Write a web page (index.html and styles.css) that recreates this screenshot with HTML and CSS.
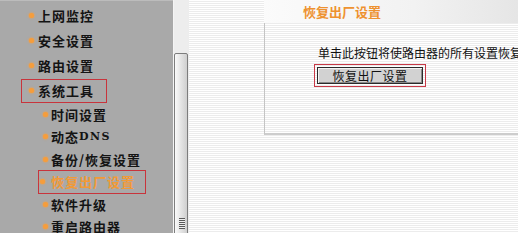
FILE: index.html
```html
<!DOCTYPE html>
<html lang="zh-CN">
<head>
<meta charset="utf-8">
<title>恢复出厂设置</title>
<link rel="stylesheet" href="styles.css">
</head>
<body>
<div class="page">
  <nav class="sidebar">
    <ul class="menu">
      <li class="top"><span class="item"><i class="dot"></i>上网监控</span></li>
      <li class="top"><span class="item"><i class="dot"></i>安全设置</span></li>
      <li class="top"><span class="item"><i class="dot"></i>路由设置</span></li>
      <li class="top"><span class="item mark"><i class="dot"></i>系统工具</span></li>
      <li class="sub"><span class="item"><i class="dot"></i>时间设置</span></li>
      <li class="sub"><span class="item"><i class="dot"></i>动态<b class="latin">DNS</b></span></li>
      <li class="sub"><span class="item"><i class="dot"></i>备份/恢复设置</span></li>
      <li class="sub cur"><span class="item mark"><i class="dot"></i>恢复出厂设置</span></li>
      <li class="sub"><span class="item"><i class="dot"></i>软件升级</span></li>
      <li class="sub"><span class="item"><i class="dot"></i>重启路由器</span></li>
    </ul>
  </nav>
  <div class="scrollbar">
    <div class="thumb"><span class="grip"></span></div>
  </div>
  <main class="main">
    <section class="panel">
      <h1 class="panel-title">恢复出厂设置</h1>
      <div class="panel-body">
        <p class="desc">单击此按钮将使路由器的所有设置恢复到出厂时的默认状态。</p>
        <span class="btn-mark"><button class="btn" type="button">恢复出厂设置</button></span>
      </div>
    </section>
  </main>
</div>
</body>
</html>
```

FILE: styles.css
```css
html, body {
  margin: 0;
  padding: 0;
  height: 100%;
  overflow: hidden;
}
body {
  font-family: "Noto Sans CJK SC", "Liberation Sans", sans-serif;
  background: #fff;
}
.page {
  display: flex;
  height: 233px;
  width: 518px;
  overflow: hidden;
}
.sidebar {
  width: 173px;
  flex: none;
  background: #a9a9a9;
  border-top: 1px solid #bcbcbc;
  box-sizing: border-box;
}
.menu {
  list-style: none;
  margin: 0;
  padding: 2px 0 0 0;
}
.menu li {
  display: flex;
  align-items: center;
}
.menu .top { height: 25px; }
.menu .sub { height: 22.5px; }
.item {
  display: flex;
  align-items: center;
  box-sizing: border-box;
  border: 1px solid transparent;
  font-weight: bold;
  font-size: 13px;
  letter-spacing: 1px;
  color: #141414;
  white-space: nowrap;
}
.top .item {
  margin-left: 21px;
  height: 24px;
  padding: 0 12px 0 7px;
}
.sub .item {
  margin-left: 42px;
  height: 24px;
  padding: 0 10px 0 0;
}
.sub.cur .item {
  margin-left: 38px;
  padding-left: 1px;
  color: #f29a36;
}
.item.mark {
  border-color: #c8343c;
}
.dot {
  width: 5px;
  height: 5px;
  border-radius: 50%;
  background: #f59d3c;
  box-shadow: 0 0 1.5px 0.5px rgba(245, 160, 70, 0.75);
  margin-right: 4px;
  flex: none;
}
.sub .dot { margin-right: 3px; }
.sub.cur .dot { margin-right: 6px; }
.latin {
  font-family: "DejaVu Serif", "Liberation Serif", serif;
  font-size: 11px;
  letter-spacing: 1.5px;
}
.scrollbar {
  width: 16px;
  flex: none;
  box-sizing: border-box;
  border-left: 1px solid #f4f4f4;
  background: #ededed;
  padding-top: 53px;
  position: relative;
}
.thumb {
  height: 190px;
  margin: 0 1px 0 0;
  box-sizing: border-box;
  border: 1px solid #7d7d7d;
  border-radius: 2px;
  background: linear-gradient(to right, #fafafa 0%, #e6e6e6 45%, #cfcfcf 100%);
  position: relative;
}
.grip {
  position: absolute;
  left: 4px;
  top: 164px;
  width: 6px;
  height: 11px;
  background: repeating-linear-gradient(to bottom, #5a5a5a 0 1px, #f0f0f0 1px 2px);
}
.main {
  flex: 1;
  min-width: 0;
  padding-left: 75px;
  background: repeating-linear-gradient(to bottom, #ffffff 0 1px, #ececec 1px 2px);
  overflow: hidden;
}
.panel {
  width: 300px;
}
.panel-title {
  margin: 0;
  height: 23px;
  line-height: 23px;
  padding-left: 39px;
  font-size: 13px;
  font-weight: bold;
  color: #ee9230;
  white-space: nowrap;
  background: linear-gradient(to right, #fbfbfb 0%, #f2f2f2 50%, #e0e0e0 100%);
}
.panel-body {
  height: 112px;
  box-sizing: border-box;
  border-left: 1px solid #c4c4c4;
  border-bottom: 2px solid #cdcdcd;
  padding: 23px 0 0 53px;
}
.desc {
  margin: 0;
  font-size: 12px;
  line-height: 14px;
  color: #111;
  white-space: nowrap;
}
.btn-mark {
  display: inline-block;
  margin: 4px 0 0 -4px;
  padding: 2px;
  border: 1px solid #c83a48;
}
.btn {
  display: block;
  width: 106px;
  height: 17px;
  margin: 0;
  padding: 0;
  box-sizing: border-box;
  border: 1px solid #2a2a2a;
  box-shadow: inset 1px 1px 0 #f4f4f4, inset -1px -1px 0 #8a8a8a;
  background: #d2d2d2;
  font-family: "Noto Sans CJK SC", sans-serif;
  font-size: 12px;
  line-height: 14px;
  letter-spacing: 0.5px;
  color: #111;
}
```
